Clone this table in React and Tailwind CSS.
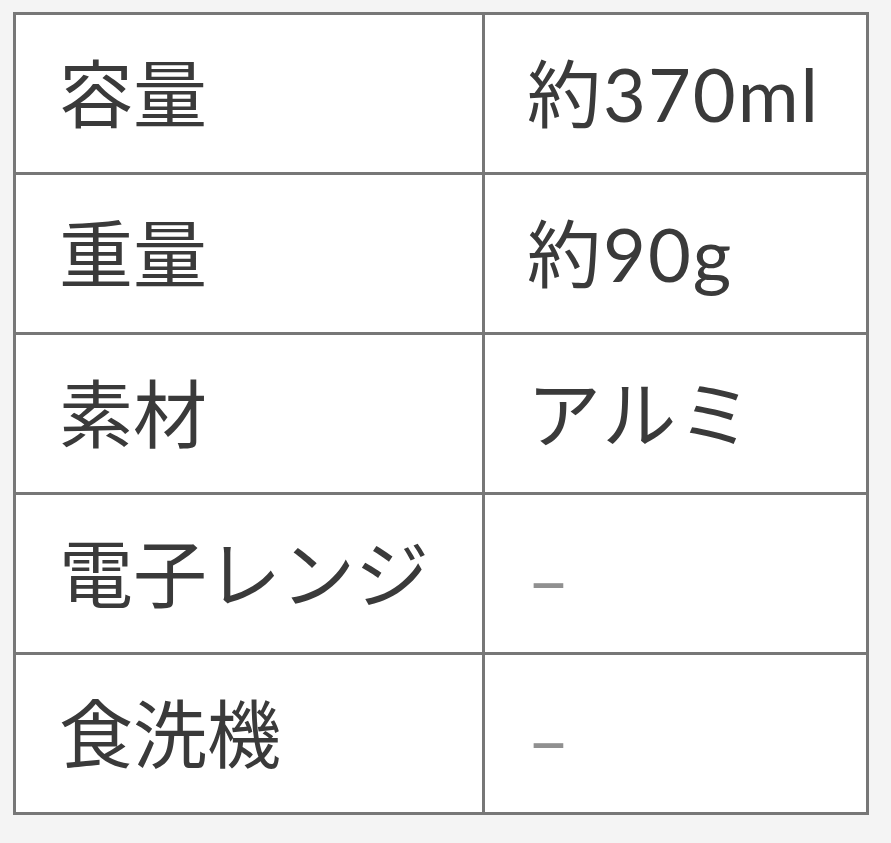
import React from 'react';

const ROWS = [
  { label: '容量', value: '約370ml' },
  { label: '重量', value: '約90g' },
  { label: '素材', value: 'アルミ' },
  { label: '電子レンジ', value: '–', muted: true },
  { label: '食洗機', value: '–', muted: true }
];

export default function App() {
  return (
    <div
      className="w-[891px] h-[843px] bg-[#f4f4f4] pt-[12px] pl-[13px]"
      style={{ fontFamily: 'Lato, "Noto Sans CJK JP", sans-serif' }}
    >
      <table className="w-[856px] border-collapse bg-white text-[#3a3a3a]">
        <tbody>
          {ROWS.map((row) => (
            <tr key={row.label} className="h-[160px]">
              <td className="w-[469px] border-[3px] border-[#777777] pl-[43px] text-[74px] leading-none">
                {row.label}
              </td>
              <td
                className={
                  'border-[3px] border-[#777777] pl-[42px] text-[74px] leading-none tracking-[2px] ' +
                  (row.muted ? 'text-[#909090] pt-[10px]' : '')
                }
              >
                {row.value}
              </td>
            </tr>
          ))}
        </tbody>
      </table>
    </div>
  );
}
